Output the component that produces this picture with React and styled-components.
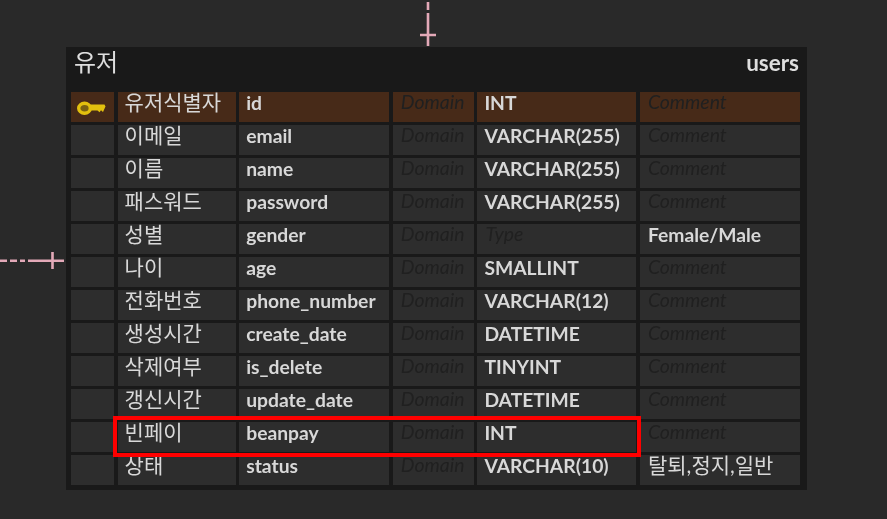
import React from "react";
import styled, { createGlobalStyle } from "styled-components";

const Global = createGlobalStyle`
  html, body { margin: 0; padding: 0; background: #292929; }
  body { width: 887px; height: 519px; overflow: hidden; }
`;

const Canvas = styled.div`
  position: relative;
  width: 887px;
  height: 519px;
  background: #292929;
  overflow: hidden;
  filter: blur(0.5px);
  font-family: Lato, "Noto Sans CJK KR", sans-serif;
`;

const Connector = styled.svg`
  position: absolute;
  left: ${p => p.$x}px;
  top: ${p => p.$y}px;
`;

const Table = styled.div`
  position: absolute;
  left: 66px;
  top: 47px;
  width: 741px;
  height: 443px;
  box-sizing: border-box;
  padding: 0 6px 0 5px;
  background: #191919;
  display: flex;
  flex-direction: column;
`;

const Header = styled.div`
  height: 45px;
  display: flex;
  justify-content: space-between;
  color: #dedede;
  font-size: 24px;
  line-height: 30px;
  padding: 0 2px 0 3px;
  box-sizing: border-box;
`;

const TableName = styled.span`
  font-size: 22.5px;
  font-weight: 700;
  padding-top: 1px;
`;

const Rows = styled.div`
  display: flex;
  flex-direction: column;
  gap: 3px;
`;

const Row = styled.div`
  display: grid;
  grid-template-columns: 43px 118px 150px 81px 159px 160px;
  column-gap: 3.6px;
  height: 30px;
`;

const Cell = styled.div`
  background: ${p => (p.$pk ? "#472a18" : "#2d2d2d")};
  display: flex;
  align-items: flex-start;
  box-sizing: border-box;
  padding-left: 7px;
  white-space: nowrap;
  color: #d8d8d8;
  font-size: 19.3px;
  font-weight: 700;
  line-height: 22px;
`;

const KeyCell = styled(Cell)`
  padding: 9px 0 0 6px;
`;

const NameCell = styled(Cell)`
  font-size: 21px;
  font-weight: 400;
  line-height: 20px;
`;

const Placeholder = styled(Cell)`
  color: #202020;
  font-size: 19.4px;
  font-weight: 400;
  font-style: italic;
  line-height: 20px;
  padding-left: 8px;
`;

const CodeCell = styled(Cell)`
  padding-left: ${p => (p.$wide ? 8 : 7)}px;
`;

const KoreanNote = styled(Cell)`
  font-size: 21px;
  font-weight: 400;
  line-height: 20px;
  padding-left: 8px;
`;

const Highlight = styled.div`
  position: absolute;
  left: 113px;
  top: 416px;
  width: 528px;
  height: 41px;
  box-sizing: border-box;
  border: 4px solid #ff0000;
`;

const Key = () => (
  <svg width="29" height="16" viewBox="0 0 29 16">
    <ellipse cx="7.500" cy="7.200" rx="5.800" ry="5" fill="#7a6212" stroke="#e2c00e" strokeWidth="3.400" />
    <path d="M13 3.500H27.500L28.500 5.500 26 11 24 9.300 22.500 11.300 20.500 9.500H13z" fill="#e2c00e" />
  </svg>
);

const rows = [
  ["유저식별자", "id", "INT", null, true],
  ["이메일", "email", "VARCHAR(255)"],
  ["이름", "name", "VARCHAR(255)"],
  ["패스워드", "password", "VARCHAR(255)"],
  ["성별", "gender", null, "Female/Male"],
  ["나이", "age", "SMALLINT"],
  ["전화번호", "phone_number", "VARCHAR(12)"],
  ["생성시간", "create_date", "DATETIME"],
  ["삭제여부", "is_delete", "TINYINT"],
  ["갱신시간", "update_date", "DATETIME"],
  ["빈페이", "beanpay", "INT"],
  ["상태", "status", "VARCHAR(10)", "탈퇴,정지,일반"],
];

const Note = ({ text }) =>
  /[가-힣]/.test(text) ? <KoreanNote>{text}</KoreanNote> : <CodeCell $wide>{text}</CodeCell>;

export default function App() {
  return (
    <Canvas>
      <Global />
      <Connector $x={418} $y={0} width="20" height="47">
        <path d="M10 2v8M10 13v33M2 35h16" stroke="#e3a9b8" strokeWidth="2.600" fill="none" />
      </Connector>
      <Connector $x={0} $y={250} width="66" height="22">
        <path d="M0 10.700h7M10 10.700h7M20 10.700h5M28 10.700h36M52.500 2v17" stroke="#e3a9b8" strokeWidth="2.600" fill="none" />
      </Connector>
      <Table>
        <Header>
          <span>유저</span>
          <TableName>users</TableName>
        </Header>
        <Rows>
          {rows.map(([label, name, type, comment, pk]) => (
            <Row key={name}>
              <KeyCell $pk={pk}>{pk && <Key />}</KeyCell>
              <NameCell $pk={pk}>{label}</NameCell>
              <CodeCell $pk={pk}>{name}</CodeCell>
              <Placeholder $pk={pk}>Domain</Placeholder>
              {type ? <CodeCell $pk={pk}>{type}</CodeCell> : <Placeholder $pk={pk}>Type</Placeholder>}
              {comment ? <Note text={comment} /> : <Placeholder $pk={pk}>Comment</Placeholder>}
            </Row>
          ))}
        </Rows>
      </Table>
      <Highlight />
    </Canvas>
  );
}
